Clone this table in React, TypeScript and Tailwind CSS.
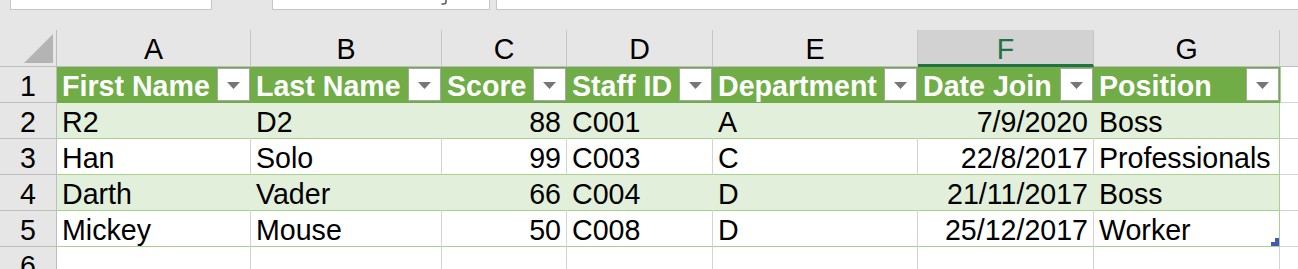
const columns = [
  { letter: 'A', width: 'w-[194px]', title: 'First Name', right: false },
  { letter: 'B', width: 'w-[191px]', title: 'Last Name', right: false },
  { letter: 'C', width: 'w-[125px]', title: 'Score', right: true },
  { letter: 'D', width: 'w-[146px]', title: 'Staff ID', right: false },
  { letter: 'E', width: 'w-[205px]', title: 'Department', right: false },
  { letter: 'F', width: 'w-[176px]', title: 'Date Join', right: true },
  { letter: 'G', width: 'w-[186px]', title: 'Position', right: false },
];

const rows = [
  ['R2', 'D2', '88', 'C001', 'A', '7/9/2020', 'Boss'],
  ['Han', 'Solo', '99', 'C003', 'C', '22/8/2017', 'Professionals'],
  ['Darth', 'Vader', '66', 'C004', 'D', '21/11/2017', 'Boss'],
  ['Mickey', 'Mouse', '50', 'C008', 'D', '25/12/2017', 'Worker'],
];

function FilterButton() {
  return (
    <div className="w-[33px] h-[33px] shrink-0 bg-white border border-[#a6a6a6] flex items-center justify-center">
      <svg width="13" height="7" viewBox="0 0 13 7" className="mt-[1px]">
        <polygon points="0,0 13,0 6.5,7" fill="#767676" />
      </svg>
    </div>
  );
}

function RowNumber({ n }: { n: number }) {
  return (
    <div className="w-[57px] shrink-0 h-full border-r border-b border-[#bdbdbd] bg-[#e6e6e6] text-center pt-[5px] leading-[28px] text-black">
      {n}
    </div>
  );
}

export default function App() {
  return (
    <div
      className="w-[1298px] h-[269px] overflow-hidden bg-[#e6e6e6] text-[28.6px]"
      style={{ fontFamily: '"Liberation Sans", Arial, sans-serif' }}
    >
      {/* name box / formula bar */}
      <div className="flex h-[10px]">
        <div className="ml-[10px] w-[202px] h-full bg-white border-l border-r border-b border-[#c6c6c6]" />
        <div className="ml-[60px] w-[218px] h-full bg-white border-l border-r border-b border-[#c6c6c6] flex justify-end pr-[41px]">
          <svg width="10" height="5" viewBox="0 0 10 5">
            <path d="M8 0 L8 2 Q8 4 5.5 4 L3.5 4" stroke="#555" strokeWidth="1.5" fill="none" />
          </svg>
        </div>
        <div className="ml-[6px] flex-1 h-full bg-white border-l border-b border-[#c6c6c6]" />
      </div>
      <div className="h-[20px]" />

      {/* column letters */}
      <div className="flex h-[37px]">
        <div className="w-[57px] shrink-0 h-full border-r border-b border-[#bdbdbd] flex justify-end items-end pr-[3px] pb-[3px]">
          <svg width="29" height="29" viewBox="0 0 29 29">
            <polygon points="29,0 29,29 0,29" fill="#b4b4b4" />
          </svg>
        </div>
        {columns.map((c) =>
          c.letter === 'F' ? (
            <div
              key={c.letter}
              className={`${c.width} shrink-0 h-full bg-[#d2d2d2] border-r border-r-[#c6c6c6] border-b-[3px] border-b-[#217346] text-center text-[#217346] pt-[5px] leading-[28px]`}
            >
              {c.letter}
            </div>
          ) : (
            <div
              key={c.letter}
              className={`${c.width} shrink-0 h-full border-r border-r-[#c6c6c6] border-b border-b-[#bdbdbd] text-center text-black pt-[5px] leading-[28px]`}
            >
              {c.letter}
            </div>
          )
        )}
        <div className="flex-1 h-full border-b border-[#bdbdbd]" />
      </div>

      {/* table header row */}
      <div className="flex h-[36px]">
        <RowNumber n={1} />
        {columns.map((c) => (
          <div
            key={c.letter}
            className={`${c.width} shrink-0 h-full bg-[#70ad47] border-r border-[#70ad47] flex items-start justify-between pl-[5px] pt-[1px]`}
          >
            <span className="font-bold text-white whitespace-nowrap leading-[28px] pt-[4px]">{c.title}</span>
            <FilterButton />
          </div>
        ))}
        <div className="flex-1 h-full bg-white border-l border-l-[#a9d08e] border-b border-b-[#d4d4d4]" />
      </div>

      {/* table body */}
      {rows.map((r, i) => {
        const band = i % 2 === 0;
        return (
          <div key={i} className="flex h-[36px]">
            <RowNumber n={i + 2} />
            {columns.map((c, j) => (
              <div
                key={c.letter}
                className={`${c.width} shrink-0 h-full border-b border-b-[#a9d08e] px-[5px] pt-[5px] leading-[28px] text-black whitespace-nowrap overflow-hidden relative ${
                  band ? 'bg-[#e2efda]' : 'bg-white'
                } ${j === 6 ? 'border-r border-r-[#a9d08e]' : band ? 'border-r border-r-[#e2efda]' : 'border-r border-r-[#d4d4d4]'} ${
                  c.right ? 'text-right' : 'text-left'
                }`}
              >
                {r[j]}
                {i === 3 && j === 6 && (
                  <>
                    <span className="absolute right-0 bottom-0 w-[8px] h-[4px] bg-[#4558b5]" />
                    <span className="absolute right-0 bottom-0 w-[4px] h-[8px] bg-[#4558b5]" />
                  </>
                )}
              </div>
            ))}
            <div className="flex-1 h-full bg-white border-b border-[#d4d4d4]" />
          </div>
        );
      })}

      {/* empty row 6 */}
      <div className="flex h-[36px]">
        <RowNumber n={6} />
        {columns.map((c) => (
          <div key={c.letter} className={`${c.width} shrink-0 h-full bg-white border-r border-[#d4d4d4]`} />
        ))}
        <div className="flex-1 h-full bg-white" />
      </div>
    </div>
  );
}
